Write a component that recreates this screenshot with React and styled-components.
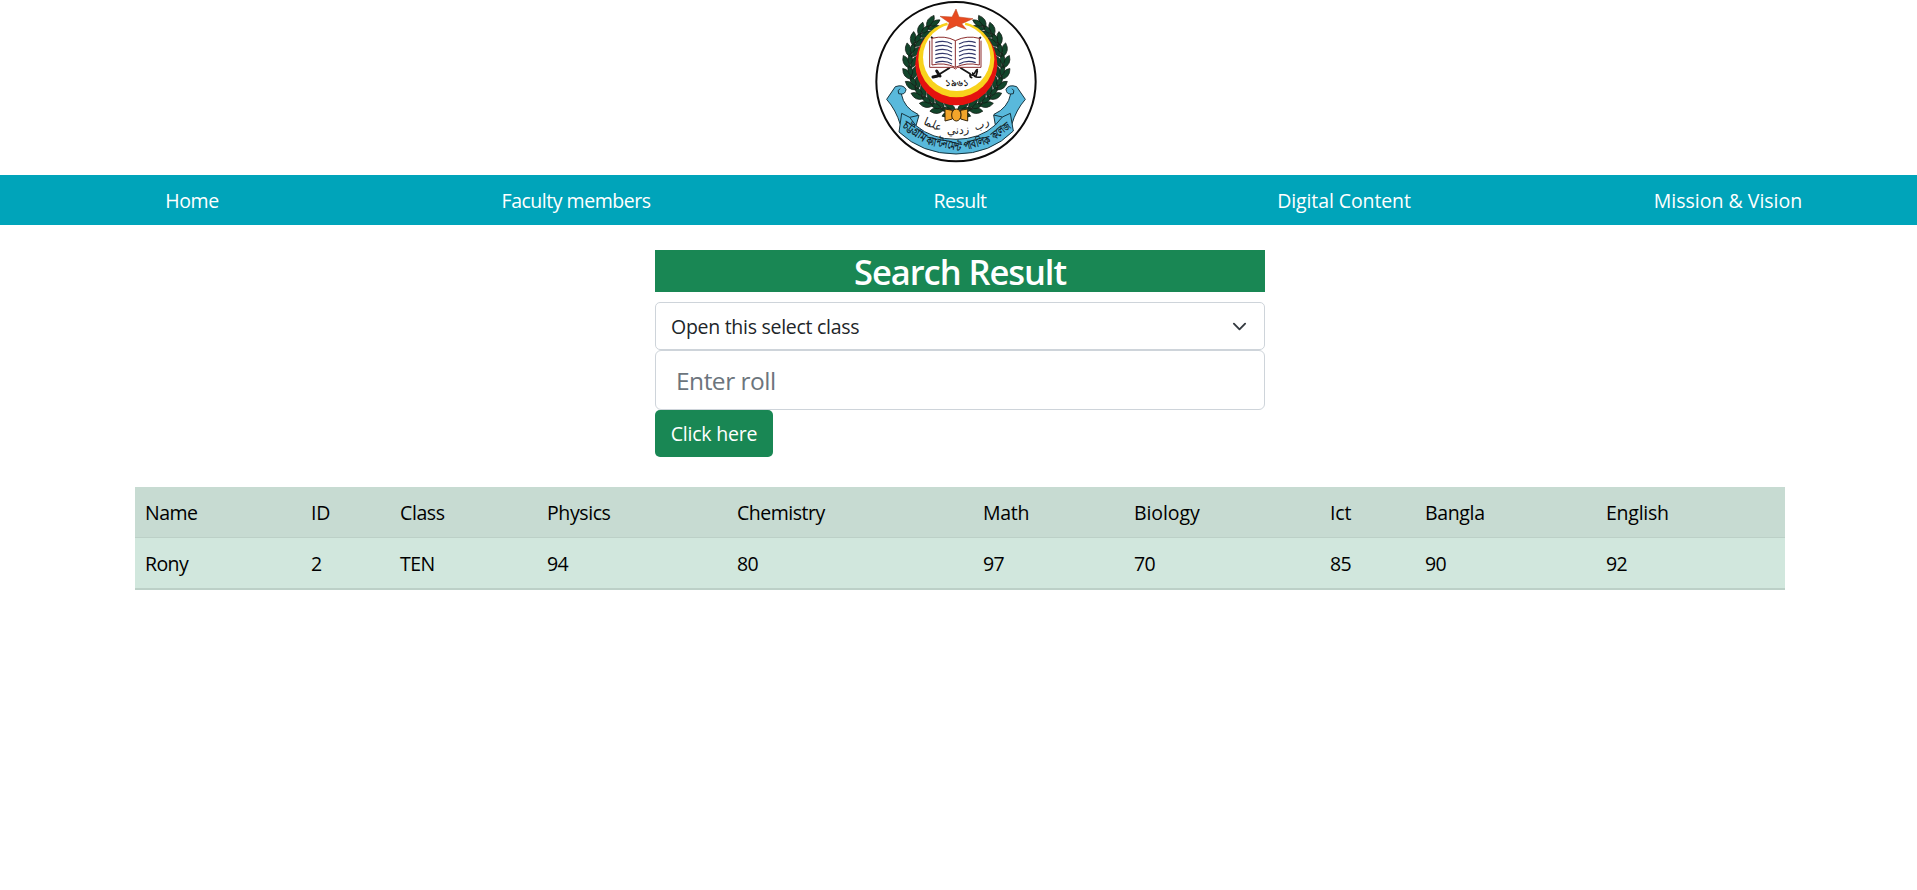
import React from 'react';
import styled, { createGlobalStyle } from 'styled-components';

const GlobalStyle = createGlobalStyle`
  *, *::before, *::after { box-sizing: border-box; }
  body {
    margin: 0;
    background: #fff;
    color: #212529;
    font-family: "Open Sans", "Noto Sans", sans-serif;
    font-size: 19.5px;
    line-height: 30px;
    overflow-x: hidden;
  }
`;

const Label = styled.span`
  letter-spacing: ${({ $track = 0 }) => $track}px;
`;

const Header = styled.header`
  display: flex;
  justify-content: center;
  height: 175px;
  padding-right: 5px;
`;

const Crest = styled.svg`
  display: block;
  width: 180px;
  height: 170px;
`;

const Nav = styled.nav`
  display: grid;
  grid-template-columns: repeat(5, 1fr);
  width: 1920px;
  height: 50px;
  background: #00a4ba;
`;

const NavLink = styled.a`
  display: flex;
  align-items: center;
  justify-content: center;
  padding-top: 2px;
  color: #fff;
  text-decoration: none;
`;

const SearchForm = styled.form`
  display: flex;
  flex-direction: column;
  align-items: flex-start;
  width: 610px;
  margin: 25px 0 30px 655px;
`;

const Title = styled.h2`
  width: 100%;
  height: 42px;
  margin: 0 0 10px;
  background: #198754;
  color: #fff;
  font-size: 34.5px;
  font-weight: 600;
  line-height: 43px;
  letter-spacing: -1.05px;
  text-align: center;
`;

const SelectBox = styled.div`
  display: flex;
  align-items: center;
  justify-content: space-between;
  width: 100%;
  height: 48px;
  padding: 2px 15px 0;
  border: 1px solid #ced4da;
  border-radius: 5px;
`;

const RollInput = styled.input`
  width: 100%;
  height: 60px;
  padding: 0 20px;
  border: 1px solid #ced4da;
  border-radius: 6px;
  outline: none;
  font: inherit;
  font-size: 24.5px;
  letter-spacing: -0.5px;
  &::placeholder { color: #6c757d; opacity: 1; }
`;

const SubmitButton = styled.button`
  width: 118px;
  height: 47px;
  padding: 0;
  border: 0;
  border-radius: 5px;
  background: #198754;
  color: #fff;
  font: inherit;
`;

const ResultTable = styled.table`
  width: 1650px;
  margin-left: 135px;
  border-collapse: collapse;
  table-layout: fixed;
  color: #000;
`;

const Row = styled.tr`
  height: ${({ $head }) => ($head ? 51 : 52)}px;
  background: ${({ $head }) => ($head ? '#c7dbd2' : '#d1e7dd')};
  box-shadow: inset 0 -${({ $head }) => ($head ? 1 : 2)}px #bcd0c7;
`;

const Column = styled.col`
  width: ${({ $width }) => $width}px;
`;

const Cell = styled.td`
  padding: 0 10px;
`;

const links = [
  ['Home', -0.45],
  ['Faculty members', -0.48],
  ['Result', -0.5],
  ['Digital Content', -0.1],
  ['Mission & Vision', 0],
];

const columns = [
  { name: 'Name', value: 'Rony', width: 166, track: -0.5 },
  { name: 'ID', value: '2', width: 89, track: -0.3 },
  { name: 'Class', value: 'TEN', width: 147, track: -0.4 },
  { name: 'Physics', value: '94', width: 190, track: -0.4 },
  { name: 'Chemistry', value: '80', width: 246, track: -0.5 },
  { name: 'Math', value: '97', width: 151, track: -0.3 },
  { name: 'Biology', value: '70', width: 196, track: -0.1 },
  { name: 'Ict', value: '85', width: 95, track: -0.1 },
  { name: 'Bangla', value: '90', width: 181, track: -0.35 },
  { name: 'English', value: '92', width: 189, track: -0.25 },
];

const leafAngles = [98, 112, 126, 140, 154, 168, 182, 196, 210, 224, 238];

function Wreath() {
  return leafAngles.map((deg) => {
    const a = (deg * Math.PI) / 180;
    const x = 271 + 139 * Math.cos(a);
    const y = 193 + 139 * Math.sin(a);
    return (
      <g key={deg} transform={`translate(${x} ${y}) rotate(${deg + 90})`}>
        <path d="M-14 0H20" stroke="#1b2a1c" strokeWidth="3" />
        <path d="M-16-3Q-6-27 21-21 15 0-16-3z" />
        <path d="M-16 3Q-6 27 21 21 15 0-16 3z" />
        <path d="M-6 0Q10-14 29 0 10 14-6 0z" />
      </g>
    );
  });
}

const arabicWords = [
  { text: 'علما', x: 197, y: 383, turn: 24 },
  { text: 'زدني', x: 277, y: 401, turn: -2 },
  { text: 'رب', x: 349, y: 382, turn: -26 },
];

const nameWords = [
  { text: 'চট্টগ্রাম', x: 140, y: 403, turn: 34, width: 76 },
  { text: 'ক্যান্টনমেন্ট', x: 231, y: 443, turn: 12, width: 106 },
  { text: 'পাবলিক', x: 336, y: 440, turn: -15, width: 82 },
  { text: 'কলেজ', x: 411, y: 401, turn: -38, width: 62 },
];

function Emblem() {
  return (
    <Crest viewBox="0 0 540 510" role="img" aria-label="School crest">
      <circle cx="270" cy="245" r="239" fill="#fff" stroke="#0b0b0b" strokeWidth="6" />
      <g fill="#12452b" stroke="#101812" strokeWidth="2">
        <Wreath />
        <g transform="translate(542 0) scale(-1 1)"><Wreath /></g>
      </g>
      <circle cx="271" cy="193" r="123" fill="#e5120f" />
      <circle cx="271" cy="178" r="114" fill="#f8d21c" />
      <circle cx="272" cy="172" r="101" fill="#fff" />
      <path d="M242 58L300 58 296 78 246 78z" fill="#fff" />
      <path d="M270 27l9 24 42 5-34 15 14 17-30-11-30 14 9-23-28-19 36 2z" fill="#e84a20" stroke="#b8431b" strokeWidth="1.5" />
      <g stroke="#151515" fill="none" strokeWidth="6" strokeLinecap="round">
        <path d="M207 231L250 204M197 112l12 12M343 113l-12 12" />
        <path d="M212 213l10 15" strokeWidth="9" />
        <path d="M201 231l14-3" strokeWidth="9" />
        <path d="M284 204l28 17q8 10 14-2t8-10M312 222q-1 10 5 11M320 219q4 16 24 12M334 214l-4 14" strokeWidth="5" />
      </g>
      <g fill="#fff" stroke="#8d2d2d" strokeWidth="3">
        <path d="M191 122v80h70l7 5 7-5h70v-80" />
        <path d="M198 115q38-10 70 7 35-17 72-7v80q-38-9-72 7-34-16-70-7z" />
        <path d="M268 122v80" />
      </g>
      <g fill="none" stroke="#34386b" strokeWidth="3.5">
        {[0, 12, 24, 36, 48, 60].map((dy) => (
          <path key={dy} d={`M208 ${128 + dy}q28-9 50 4M279 ${132 + dy}q24-13 50-4`} />
        ))}
      </g>
      <text x="272" y="259" textAnchor="middle" fontSize="28" fontWeight="700" fill="#111">১৯৬১</text>
      <g fill="#59b9dc" stroke="#17353f" strokeWidth="3" strokeLinejoin="round">
        <path d="M88 260q24-8 32 8-2 15-14 14 8 42 50 61l-28 34-25-3Q90 330 62 298z" />
        <path d="M452 260q-24-8-32 8 2 15 14 14-8 42-50 61l28 34 25-3q13-44 41-76z" />
        <path d="M102 266q-9 5-4 15l8 1M438 266q9 5 4 15l-8 1" fill="none" />
        <path d="M107 340l24 12 28-6-9 31q48 41 120 41 71 0 118-43l-5-30 26 6 24-11 9 53q-68 69-172 69-102 0-171-66z" />
        <path d="M131 352l19 25M409 351l-21 24" fill="none" />
      </g>
      <g fill="#f2a52b" stroke="#33240c" strokeWidth="3">
        <path d="M259 331l-22-4v36l22-6zM284 331l21-4v36l-21-6z" />
        <ellipse cx="271" cy="345" rx="14" ry="18" />
      </g>
      <g fontSize="33" fill="#222" textAnchor="middle">
        {arabicWords.map(({ text, x, y, turn }) => (
          <text key={text} transform={`translate(${x} ${y}) rotate(${turn})`}>{text}</text>
        ))}
      </g>
      <g fontSize="34" fontWeight="600" fill="#10242c" textAnchor="middle">
        {nameWords.map(({ text, x, y, turn, width }) => (
          <text key={text} transform={`translate(${x} ${y}) rotate(${turn})`} textLength={width} lengthAdjust="spacingAndGlyphs">{text}</text>
        ))}
      </g>
    </Crest>
  );
}

const ChevronIcon = styled.svg`
  width: 15px;
  height: 15px;
  margin: 0 2px 2px 0;
  fill: none;
  stroke: #343a40;
  stroke-width: 2;
  stroke-linecap: round;
  stroke-linejoin: round;
`;

export default function App() {
  return (
    <>
      <GlobalStyle />
      <Header><Emblem /></Header>
      <Nav>
        {links.map(([text, track]) => (
          <NavLink key={text}><Label $track={track}>{text}</Label></NavLink>
        ))}
      </Nav>
      <SearchForm>
        <Title>Search Result</Title>
        <SelectBox>
          <Label $track={-0.28}>Open this select class</Label>
          <ChevronIcon viewBox="0 0 16 16"><path d="m2 5 6 6 6-6" /></ChevronIcon>
        </SelectBox>
        <RollInput placeholder="Enter roll" />
        <SubmitButton type="button"><Label $track={-0.2}>Click here</Label></SubmitButton>
      </SearchForm>
      <ResultTable>
        <colgroup>
          {columns.map((c) => <Column key={c.name} $width={c.width} />)}
        </colgroup>
        <tbody>
          <Row $head>
            {columns.map((c) => <Cell key={c.name}><Label $track={c.track}>{c.name}</Label></Cell>)}
          </Row>
          <Row>
            {columns.map((c) => <Cell key={c.name}><Label $track={-0.6}>{c.value}</Label></Cell>)}
          </Row>
        </tbody>
      </ResultTable>
    </>
  );
}
